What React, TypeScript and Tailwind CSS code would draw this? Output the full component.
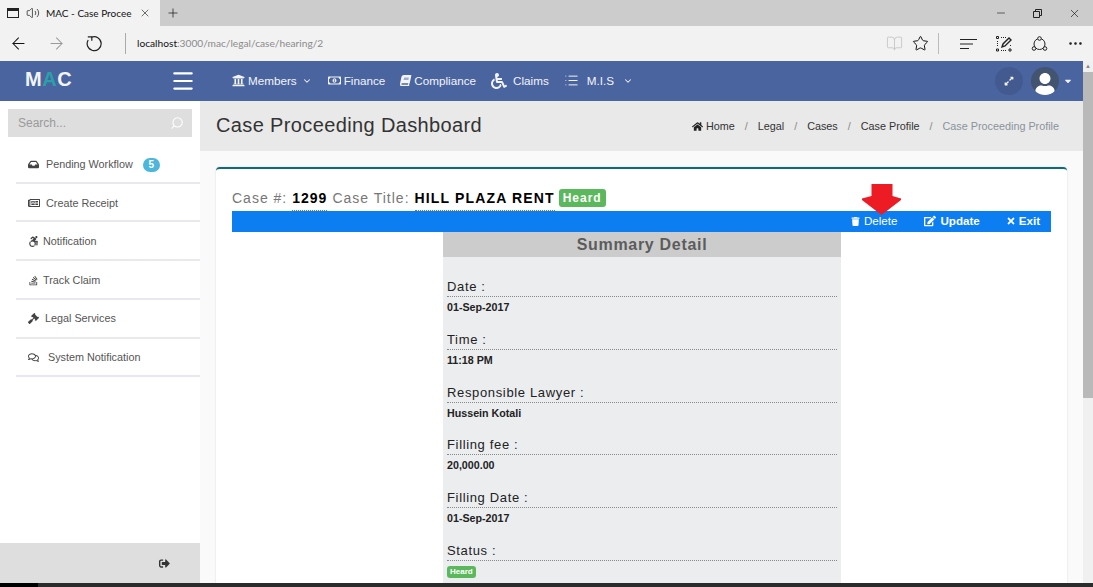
import React from "react";
import {
  FaUniversity,
  FaRegMoneyBillAlt,
  FaBook,
  FaWheelchair,
  FaHome,
  FaTrash,
  FaEdit,
  FaTimes,
  FaSignOutAlt,
  FaInbox,
  FaRegNewspaper,
  FaGavel,
  FaRegComments,
  FaAccessibleIcon,
  FaStackOverflow,
  FaExpandAlt,
  FaUser,
  FaCaretDown,
} from "react-icons/fa";
import {
  ArrowLeft,
  ArrowRight,
  Star,
  BookOpen,
  Menu,
  List,
  Search,
  ChevronDown,
  X,
  Plus,
  Minus,
  Volume2,
  Ellipsis,
} from "lucide-react";

const sideItems = [
  { label: "Pending Workflow", Icon: FaInbox, size: 11, gap: "gap-[7px]", badge: "5", h: "h-[39px] pt-[2px]" },
  { label: "Create Receipt", Icon: FaRegNewspaper, size: 12, gap: "gap-[6px]", h: "h-[38px] pt-[2px]" },
  { label: "Notification", Icon: FaAccessibleIcon, size: 11, gap: "gap-[4px]", h: "h-[39px] pt-[2px]" },
  { label: "Track Claim", Icon: FaStackOverflow, size: 11, gap: "gap-[4px]", h: "h-[39px] pt-[2px]" },
  { label: "Legal Services", Icon: FaGavel, size: 11, gap: "gap-[6px]", h: "h-[39px]" },
  { label: "System Notification", Icon: FaRegComments, size: 11, gap: "gap-[9px]", h: "h-[38px]" },
];

const details = [
  { label: "Date :", value: "01-Sep-2017", h: "h-[53px]" },
  { label: "Time :", value: "11:18 PM", h: "h-[53px]" },
  { label: "Responsible Lawyer :", value: "Hussein Kotali", h: "h-[52px]" },
  { label: "Filling fee :", value: "20,000.00", h: "h-[53px]" },
  { label: "Filling Date :", value: "01-Sep-2017", h: "h-[53px]" },
];

function BrowserChrome() {
  return (
    <div className="shrink-0 text-[#111]">
      {/* tab strip */}
      <div className="flex h-[26px] bg-[#cccccc]">
        <div className="flex w-[160px] items-center bg-[#f2f2f2] pl-[7px]">
          <div className="h-[10px] w-[12px] border border-t-[3px] border-[#222]"></div>
          <Volume2 size={14} strokeWidth={1.2} className="ml-[7px]" />
          <span className="ml-[6px] w-[92px] whitespace-nowrap font-['Lato',sans-serif] text-[10px]">MAC - Case Procee</span>
          <X size={12} strokeWidth={1.2} className="ml-[1px]" />
        </div>
        <Plus size={14} strokeWidth={1.2} className="ml-[6px] mt-[6px]" />
        <div className="ml-auto flex items-center gap-[26px] pr-[12px]">
          <Minus size={12} strokeWidth={1.2} />
          <svg width="9" height="9" viewBox="0 0 9 9" fill="none" stroke="#222">
            <path d="M0.5 2.5h6v6h-6zM2.5 2.5v-2h6v6h-2" />
          </svg>
          <X size={13} strokeWidth={1.2} />
        </div>
      </div>
      {/* address bar */}
      <div className="flex h-[35px] items-center bg-[#f2f2f2]">
        <ArrowLeft size={19} strokeWidth={1.3} className="ml-[9px]" />
        <ArrowRight size={19} strokeWidth={1.3} className="ml-[19px] text-[#999]" />
        <svg width="17" height="17" viewBox="0 0 17 17" fill="none" stroke="#222" strokeWidth="1.2" className="ml-[20px]">
          <path d="M5.5 2.2A7 7 0 1 1 2.2 5" />
          <path d="M5.8 5.8V1.8H1.8" />
        </svg>
        <div className="ml-[22px] h-[21px] w-px bg-[#aaa]"></div>
        <div className="ml-[11px] font-['Lato',sans-serif] text-[10.2px]">
          localhost<span className="text-[#8a8a8a]">:3000/mac/legal/case/hearing/2</span>
        </div>
        <div className="ml-auto flex items-center pr-[9px]">
          <BookOpen size={17} strokeWidth={1.2} className="text-[#c4c4c4]" />
          <Star size={17} strokeWidth={1.4} className="ml-[9px]" />
          <div className="ml-[9px] h-[21px] w-px bg-[#bbb]"></div>
          <svg width="17" height="12" viewBox="0 0 17 12" stroke="#222" strokeWidth="1.2" className="ml-[21px]">
            <path d="M0 1.5h17M0 6h13M0 10.5h9" />
          </svg>
          <svg width="16" height="16" viewBox="0 0 16 16" fill="none" stroke="#222" className="ml-[19px]">
            <path d="M5 1.5h5M1.5 5v6M14.5 9v2M5 14.5h6" strokeDasharray="1 1" />
            <path d="M0.5 0.5h2v2h-2zM13 13h2v2h-2zM0.5 13h2v2h-2z" />
            <path d="M6 11l1-3 6-6 2 2-6 6z" strokeWidth="1.4" />
          </svg>
          <svg width="17" height="16" viewBox="0 0 17 16" fill="none" stroke="#222" className="ml-[19px]">
            <circle cx="8.5" cy="8" r="5.5" />
            <circle cx="8.5" cy="2.5" r="1.8" fill="#f2f2f2" />
            <circle cx="3" cy="12.5" r="1.8" fill="#f2f2f2" />
            <circle cx="14" cy="12.5" r="1.8" fill="#f2f2f2" />
          </svg>
          <Ellipsis size={17} strokeWidth={1.6} className="ml-[19px]" />
        </div>
      </div>
    </div>
  );
}

function TopNav() {
  return (
    <div className="flex h-[40px] shrink-0 items-center bg-[#4a64a0] text-[11.7px] text-[#f2f4f8]">
      <div className="ml-[25px] mb-[4px] w-[148px] text-[20px] font-bold leading-none tracking-[0.5px]">
        M<span className="text-[#2aa0a8]">A</span>C
      </div>
      <Menu size={26} strokeWidth={2} className="ml-[-3px] text-white" />
      <div className="ml-[36px] flex items-center">
        <FaUniversity size={13} />
        <span className="ml-[3px]">Members</span>
        <ChevronDown size={10} strokeWidth={2.5} className="ml-[5px]" />
      </div>
      <div className="ml-[16px] flex items-center">
        <FaRegMoneyBillAlt size={13} />
        <span className="ml-[3px]">Finance</span>
      </div>
      <div className="ml-[15px] flex items-center">
        <FaBook size={11} className="-skew-x-12" />
        <span className="ml-[3px]">Compliance</span>
      </div>
      <div className="ml-[15px] flex items-center">
        <FaWheelchair size={16} />
        <span className="ml-[6px]">Claims</span>
      </div>
      <div className="ml-[15px] flex items-center">
        <List size={15} strokeWidth={1.6} />
        <span className="ml-[8px]">M.I.S</span>
        <ChevronDown size={10} strokeWidth={2.5} className="ml-[9px]" />
      </div>
      <div className="ml-auto flex items-center pr-[10px]">
        <div className="flex h-[28px] w-[28px] items-center justify-center rounded-full bg-[#435a90]">
          <FaExpandAlt size={10} />
        </div>
        <div className="ml-[8px] flex h-[28px] w-[28px] items-end justify-center overflow-hidden rounded-full bg-[#435470]">
          <FaUser size={22} className="text-white" />
        </div>
        <FaCaretDown size={10} className="ml-[4px]" />
      </div>
    </div>
  );
}

function Sidebar() {
  return (
    <div className="flex w-[200px] shrink-0 flex-col bg-white">
      <div className="px-[8px] pt-[8px]">
        <div className="flex h-[28px] items-center justify-between bg-[#dedede] pl-[10px] pr-[8px] text-[12px] text-[#9a9a9a]">
          <span>Search...</span>
          <Search size={14} strokeWidth={1.8} className="-scale-x-100 text-white" />
        </div>
      </div>
      <div className="mt-[8px] pl-[16px]">
        {sideItems.map(({ label, Icon, size, gap, badge, h }) => (
          <div
            key={label}
            className={`flex ${h} items-center ${gap} border-b-2 border-[#e8e8ee] pl-[12px] text-[10.8px] text-[#555]`}
          >
            <Icon size={size} className="shrink-0 text-[#444]" />
            <span>{label}</span>
            {badge && (
              <span className="ml-[3px] flex h-[14px] w-[17px] items-center justify-center rounded-full bg-[#4db6dc] text-[10px] font-bold text-white">
                {badge}
              </span>
            )}
          </div>
        ))}
      </div>
      <div className="mt-auto flex h-[40px] items-center bg-[#dedede] pl-[159px] text-[#333]">
        <FaSignOutAlt size={11} />
      </div>
    </div>
  );
}

function Breadcrumb() {
  return (
    <div className="flex items-center text-[10.8px] text-[#333]">
      <FaHome size={11} className="text-[#222]" />
      <span className="ml-[3px]">Home</span>
      <span className="mx-[10px] text-[#888]">/</span>
      <span>Legal</span>
      <span className="mx-[10px] text-[#888]">/</span>
      <span>Cases</span>
      <span className="mx-[10px] text-[#888]">/</span>
      <span>Case Profile</span>
      <span className="mx-[10px] text-[#888]">/</span>
      <span className="text-[#8a939b]">Case Proceeding Profile</span>
    </div>
  );
}

function SummaryDetail() {
  return (
    <div className="ml-[211px] w-[398px] bg-[#ebedef] pb-[6px]">
      <div className="flex h-[25px] items-center justify-center bg-[#cccccc] text-[16px] font-bold tracking-[0.7px] text-[#5c5c5c]">
        Summary Detail
      </div>
      <div className="px-[4px] pt-[15px]">
        {details.map((d) => (
          <div key={d.label} className={d.h}>
            <div className="h-[25px] border-b border-dotted border-[#888] pt-[7px] text-[13px] leading-[15px] tracking-[0.65px] text-[#222]">
              {d.label}
            </div>
            <div className="mt-[3px] text-[10.7px] font-bold leading-[14px] text-[#222]">{d.value}</div>
          </div>
        ))}
        <div className="h-[25px] border-b border-dotted border-[#888] pt-[7px] text-[13px] leading-[15px] tracking-[0.65px] text-[#222]">
          Status :
        </div>
        <span className="mt-[5px] block w-fit rounded-[3px] bg-[#5cb85c] px-[3px] text-[8px] font-bold leading-[12px] text-white">
          Heard
        </span>
      </div>
    </div>
  );
}

export default function App() {
  return (
    <div className="relative flex h-[587px] w-[1093px] flex-col overflow-hidden bg-white font-['Liberation_Sans',Arial,sans-serif]">
      <BrowserChrome />
      <div className="flex min-h-0 flex-1">
        <div className="flex min-w-0 flex-1 flex-col">
          <TopNav />
          <div className="flex min-h-0 flex-1">
            <Sidebar />
            <div className="flex min-w-0 flex-1 flex-col overflow-hidden bg-[#fafafa]">
              {/* Page header */}
              <div className="flex h-[50px] shrink-0 items-center justify-between bg-[#e9e9e9] pl-[16px] pr-[24px]">
                <h1 className="mb-[3px] text-[20px] tracking-[0.37px] text-[#333]">Case Proceeding Dashboard</h1>
                <Breadcrumb />
              </div>
              {/* Card */}
              <div className="mx-[16px] mt-[16px] flex-1 rounded-t-[4px] border-t-2 border-[#0f6b74] bg-white px-[16px] pt-[20px] shadow-[0_0_2px_rgba(0,0,0,0.15)]">
                <div className="flex h-[22px] items-start text-[14px] leading-[18px] tracking-[1px] text-[#777]">
                  <span>Case #:</span>
                  <span className="ml-[5px] border-b border-dotted border-[#777] pb-[3px] font-bold text-black">1299</span>
                  <span className="ml-[5px]">Case Title:</span>
                  <span className="ml-[5px] border-b border-dotted border-[#777] pb-[3px] font-bold tracking-[1.15px] text-black">HILL PLAZA RENT</span>
                  <span className="ml-[4px] rounded-[3px] bg-[#5cb85c] px-[4px] text-[12px] leading-[18px] font-bold text-white">Heard</span>
                </div>
                <div className="flex h-[21px] items-center justify-end bg-[#0d7ef2] pb-px pr-[11px] text-[11.6px] text-white">
                  <FaTrash size={9} />
                  <span className="ml-[4px]">Delete</span>
                  <FaEdit size={12} className="ml-[27px]" />
                  <span className="ml-[4px] font-bold">Update</span>
                  <FaTimes size={10} className="ml-[26px]" />
                  <span className="ml-[3px] font-bold">Exit</span>
                </div>
                <SummaryDetail />
              </div>
            </div>
          </div>
        </div>
        {/* Page scrollbar */}
        <div className="flex w-[10px] shrink-0 flex-col bg-[#f0f0f0]">
          <div className="flex h-[11px] items-center justify-center text-[6px] text-[#888]">▲</div>
          <div className="h-[326px] bg-[#b9b9b9]"></div>
        </div>
      </div>
      {/* Windows taskbar edge */}
      <div className="flex h-[4px] shrink-0 bg-[#2b2b2b]">
        <div className="w-[38px] bg-black"></div>
      </div>
      {/* Red annotation arrow */}
      <svg width="39" height="31" viewBox="0 0 39 31" className="absolute left-[862px] top-[184px]">
        <path d="M9.5 0h21v12l8.5 2.5v1.5L19.5 31 0 16v-1.5L9.5 12z" fill="#ed1c24" />
      </svg>
    </div>
  );
}
